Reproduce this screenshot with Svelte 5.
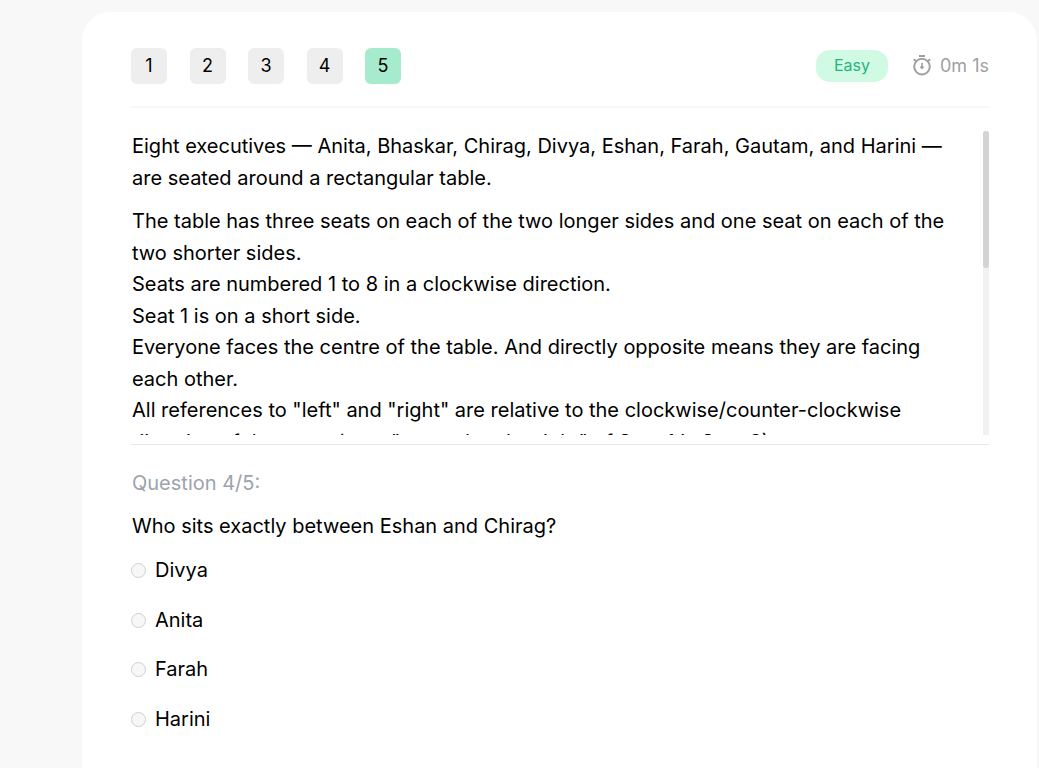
<script>
    import { onMount } from 'svelte';

    let current = $state(5);
    let answer = $state('');
    let passage;
    let thumbSize = $state(45);
    let thumbTop = $state(0);

    const sets = [1, 2, 3, 4, 5];
    const options = ['Divya', 'Anita', 'Farah', 'Harini'];

    // thumb size and position, in percent of the track
    function updateThumb() {
        thumbSize = (passage.clientHeight / passage.scrollHeight) * 100;
        thumbTop = (passage.scrollTop / passage.scrollHeight) * 100;
    }

    onMount(updateThumb);
</script>

<svelte:window onresize={updateThumb} />

<main class="page">
    <section class="card">
        <header class="top">
            <nav class="sets">
                {#each sets as n}
                    <button type="button" class="set" class:active={n === current} onclick={() => (current = n)}>{n}</button>
                {/each}
            </nav>
            <div class="status">
                <span class="level">Easy</span>
                <span class="timer">
                    <svg width="20" height="22" viewBox="0 0 20 22" fill="none" stroke="currentColor" aria-hidden="true">
                        <path d="M7 1h6" stroke-width="2" />
                        <circle cx="10" cy="11.6" r="7.8" stroke-width="2" />
                        <path d="M1.8 4.2l2.6 2.2M18.2 4.2l-2.6 2.2" stroke-width="2" />
                        <path d="M10 7.8v4" stroke-width="1.6" />
                        <circle cx="10" cy="12.2" r="1.7" fill="currentColor" stroke="none" />
                    </svg>
                    0m 1s
                </span>
            </div>
        </header>

        <div class="reader">
            <div class="passage" bind:this={passage} onscroll={updateThumb}>
                <p>Eight executives — Anita, Bhaskar, Chirag, Divya, Eshan, Farah, Gautam, and Harini — are seated around a rectangular table.</p>
                <p>
                    The table has three seats on each of the two longer sides and one seat on each of the two shorter sides.<br />
                    Seats are numbered 1 to 8 in a clockwise direction.<br />
                    Seat 1 is on a short side.<br />
                    Everyone faces the centre of the table. And directly opposite means they are facing each other.<br />
                    All references to "left" and "right" are relative to the clockwise/counter-clockwise direction of the seats (e.g., "second to the right" of Seat 1 is Seat 3).
                </p>
            </div>
            <div class="track">
                <div class="thumb" style="height: {thumbSize}%; margin-top: calc(304px * {thumbTop / 100});"></div>
            </div>
        </div>

        <form class="question">
            <p class="count">Question 4/5:</p>
            <p class="ask" id="ask">Who sits exactly between Eshan and Chirag?</p>
            <div class="options" role="radiogroup" aria-labelledby="ask">
                {#each options as option}
                    <label class="option">
                        <input type="radio" name="answer" value={option} bind:group={answer} />
                        {option}
                    </label>
                {/each}
            </div>
        </form>
    </section>
</main>

<style>
    :global(body) {
        margin: 0;
        background: #f8f8f8;
    }

    .page {
        box-sizing: border-box;
        display: flex;
        min-height: 100vh;
        padding: 12px 2px 0 82px;
        font-family: Inter, sans-serif;
        font-size: 20px;
        line-height: 1.575;
        color: #000;
    }

    .card {
        box-sizing: border-box;
        flex: 1;
        min-width: 0;
        padding: 36px 48px 24px 49px;
        background: #fff;
        border-radius: 28px 28px 0 0;
    }

    .top {
        display: flex;
        align-items: center;
        justify-content: space-between;
        padding-bottom: 22px;
        border-bottom: 2px solid #f7f7f7;
    }

    .sets {
        display: flex;
        justify-content: space-between;
        width: 270px;
    }

    .set {
        width: 36px;
        height: 36px;
        padding: 0;
        border: 0;
        border-radius: 6px;
        background: #eee;
        color: #000;
        font: inherit;
        font-size: 18px;
        line-height: 34px;
        cursor: pointer;
    }

    .set.active {
        background: #a7ebcf;
    }

    .status {
        display: flex;
        align-items: center;
        gap: 24px;
    }

    .level {
        padding: 0 18px 2px;
        border-radius: 14px;
        background: #d1fae5;
        color: #24b47e;
        font-size: 16px;
        line-height: 30px;
    }

    .timer {
        display: flex;
        align-items: center;
        gap: 8px;
        color: #a0a0a0;
        font-size: 18px;
        line-height: 32px;
    }

    .reader {
        display: flex;
        height: 304px;
        margin-top: 23px;
    }

    .passage {
        box-sizing: border-box;
        flex: 1;
        min-width: 0;
        padding: 0 24px 0 1px;
        overflow-y: scroll;
        scrollbar-width: none;
    }

    .passage p {
        margin: 0 0 12px;
    }

    .passage p:last-child {
        margin: 0;
        padding-bottom: 346px;
    }

    .track {
        width: 6px;
        overflow: hidden;
        background: #f1f1f1;
    }

    .thumb {
        border-radius: 3px;
        background: #d4d4d4;
    }

    .question {
        margin-top: 9px;
        padding-top: 23px;
        border-top: 1px solid #e5e7eb;
    }

    .count,
    .ask {
        padding-left: 1px;
    }

    .count {
        margin: 0 0 11px;
        color: #9ca3af;
    }

    .ask {
        margin: 0 0 13px;
    }

    .options {
        display: flex;
        flex-direction: column;
        gap: 18px;
    }

    .option {
        display: flex;
        align-items: center;
        gap: 9px;
        cursor: pointer;
    }

    .option input {
        appearance: none;
        box-sizing: border-box;
        width: 15px;
        height: 15px;
        margin: 0;
        border: 1px solid #d0d0d0;
        border-radius: 50%;
        background: #f7f7f7;
    }

    .option input:checked {
        border: 4px solid #24b47e;
    }
</style>
